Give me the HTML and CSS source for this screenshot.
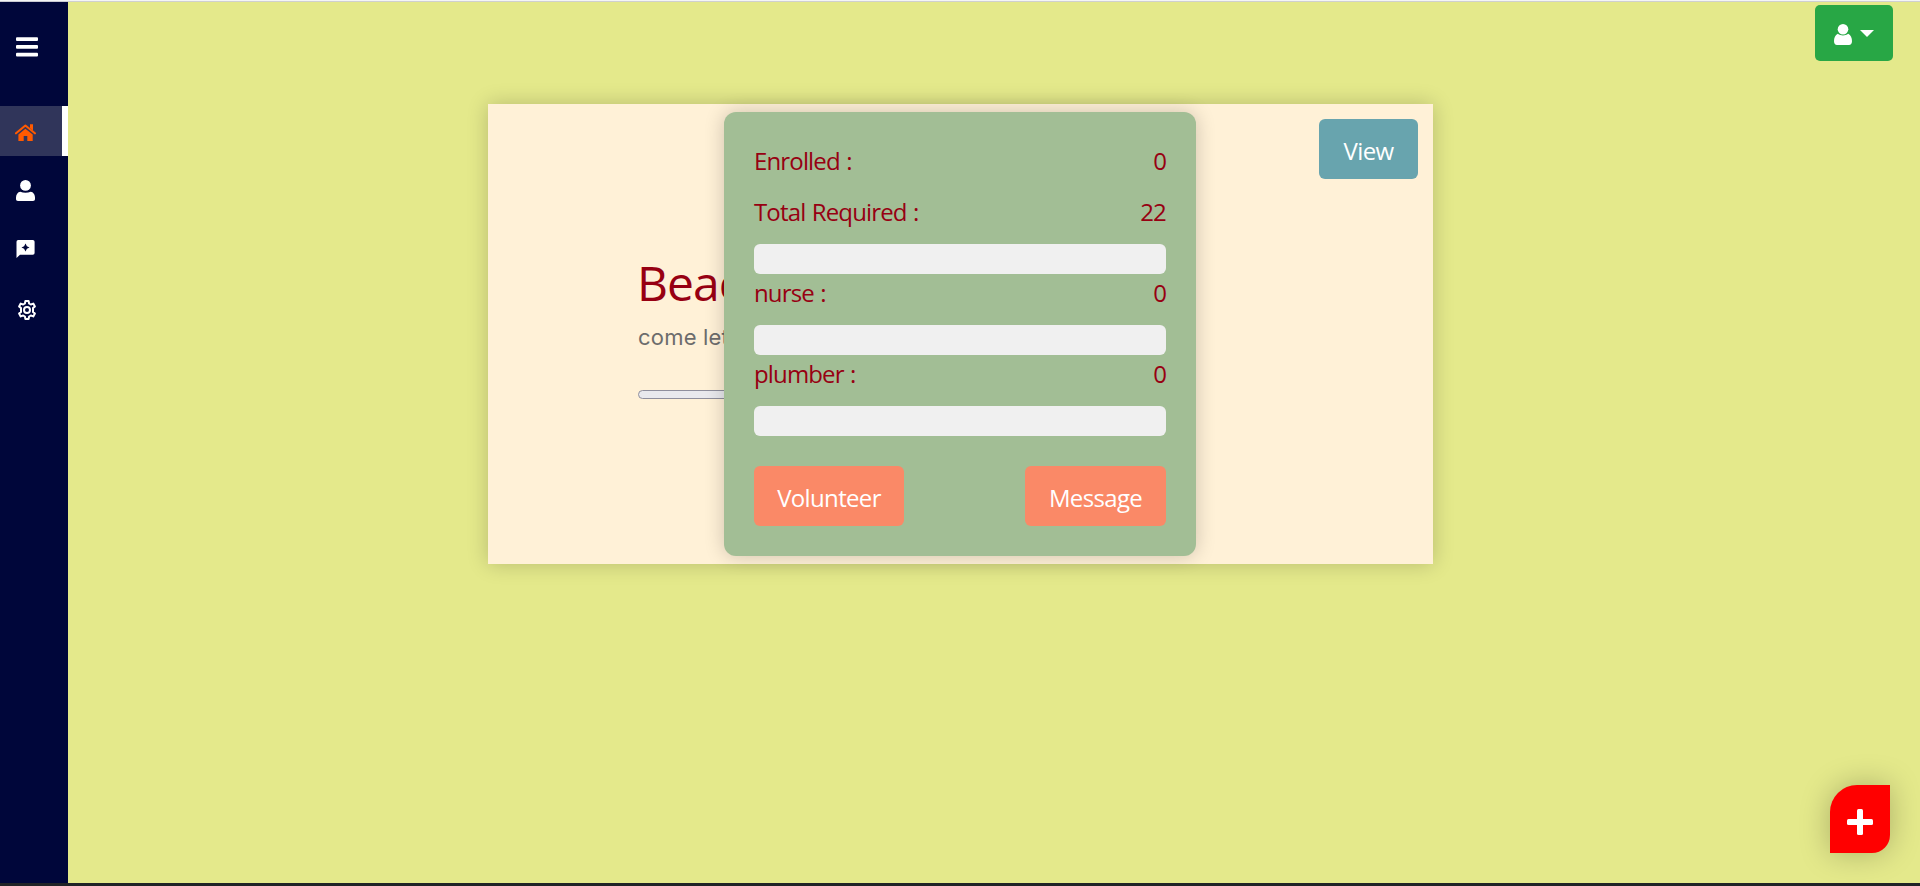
FILE: index.html
```html
<!DOCTYPE html>
<html lang="en">
<head>
<meta charset="utf-8">
<title>Dashboard</title>
<link rel="stylesheet" href="styles.css">
</head>
<body>
<div class="app">
  <nav class="sidebar">
    <a class="menu"><svg width="22" height="20" viewBox="0 0 22 20"><g fill="#fff"><rect y="0.3" width="22" height="3.8" rx="1"/><rect y="8" width="22" height="3.8" rx="1"/><rect y="15.7" width="22" height="3.8" rx="1"/></g></svg></a>
    <a class="item active"><svg class="home" width="21" height="17" viewBox="0 0 21 17"><path d="M1 9.3 10.4 1.5 19.9 9.3" fill="none" stroke="#ff5a00" stroke-width="2.1" stroke-linecap="round" stroke-linejoin="round"/><path d="M15 0.3h3v6.2l-3-2.5zM3.4 10.600l7-5.8 7.3 5.8V17H12.3v-5H8.700v5H3.400z" fill="#ff5a00"/></svg></a>
    <a class="item"><svg width="19" height="21" viewBox="0 0 19 21"><g fill="#fff"><circle cx="9.5" cy="5.4" r="5.4"/><path d="M4.3 11.7c3.2 1.5 7.2 1.5 10.4 0C17.3 12 19 14.500 19 17.500V19c0 1.300-.7 2-2 2H2c-1.300 0-2-.7-2-2v-1.500C0 14.500 1.700 12 4.300 11.700z"/></g></svg></a>
    <a class="item"><svg width="19" height="18" viewBox="0 0 19 18"><path d="M2.200 0h14.600Q18.600 0 18.600 1.800v11.100q0 1.800-1.800 1.800H4L.5 18V1.800Q.5 0 2.200 0z" fill="#fff"/><path d="M9.500 3.500 10.900 6.300 13.500 7.500 10.900 8.800 9.500 11.600 8.100 8.800 5.500 7.500 8.100 6.300z" fill="#00063a"/></svg></a>
    <a class="item gear"><svg width="20" height="20" viewBox="0 0 20 20"><g fill="none" stroke="#fff" stroke-width="2" stroke-linejoin="round"><path d="M8.400 1h3.200l.5 2.500 1.700 1 2.500-.9 1.600 2.800L16 8.100v3.800l1.900 1.700-1.600 2.800-2.500-.9-1.700 1-.5 2.500H8.400l-.5-2.500-1.700-1-2.500.9-1.600-2.800L4 11.900V8.100L2.100 6.400l1.600-2.800 2.500.9 1.700-1z"/><circle cx="10" cy="10" r="3"/></g></svg></a>
  </nav>
  <main class="content">
    <button class="account">
      <svg width="18" height="21" viewBox="0 0 18 21"><g fill="#fff"><circle cx="9" cy="5.300" r="5.300"/><path d="M3.800 9.800c3 2.300 7.400 2.300 10.400 0C16.800 10.800 18 14 18 17.300c0 2.300-1.200 3.700-3 3.700H3c-1.800 0-3-1.400-3-3.700C0 14 1.200 10.800 3.800 9.800z"/></g></svg>
      <span class="caret"></span>
    </button>
    <article class="card">
      <div class="summary">
        <h1 class="title">Beac</h1>
        <p class="text">come let</p>
        <div class="track"></div>
      </div>
      <button class="btn view"><span>View</span></button>
      <section class="modal">
        <div class="row"><span>Enrolled :</span><span>0</span></div>
        <div class="row"><span>Total Required :</span><span>22</span></div>
        <div class="bar"></div>
        <div class="row"><span>nurse :</span><span>0</span></div>
        <div class="bar"></div>
        <div class="row"><span>plumber :</span><span>0</span></div>
        <div class="bar"></div>
        <div class="actions"><button class="btn volunteer"><span>Volunteer</span></button><button class="btn message"><span>Message</span></button></div>
      </section>
    </article>
    <button class="fab"><svg width="26" height="26" viewBox="0 0 26 26"><g fill="#fff"><rect x="10" width="6" height="26" rx="1.500"/><rect y="10" width="26" height="6" rx="1.500"/></g></svg></button>
  </main>
</div>
</body>
</html>
```
FILE: styles.css
```css
* { box-sizing: border-box; }
body { margin: 0; font-family: "Open Sans", "Noto Sans", sans-serif; background: #e4e98b; }
svg { display: block; }
button { border: 0; padding: 0; font: inherit; color: #fff; }
.app { display: flex; height: 886px; overflow: hidden; border-top: 1px solid #f4f5f6; border-bottom: 3px solid #202326; }
.sidebar { width: 68px; background: #00063a; border-top: 1px solid #cacbd2; }
.menu { display: block; height: 104px; padding: 35px 0 0 16px; }
.item { display: flex; align-items: center; height: 50px; padding-left: 16px; margin-bottom: 9px; }
.item.active { background: #30355a; border-right: 6px solid #fff; padding: 3px 0 0 15px; }
.item.gear { padding-left: 17px; height: 54px; }
.content { position: relative; flex: 1; border-top: 1px solid #cfd0cf; display: flex; flex-direction: column; }
.account { align-self: flex-end; margin: 3px 27px 0 0; width: 78px; height: 56px; background: #28a745; border-radius: 5px; display: flex; align-items: center; padding-left: 19px; gap: 8px; }
.account svg { margin-top: 3px; }
.caret { border: 7px solid transparent; border-top-color: #fff; border-bottom: 0; margin-top: 1px; }
.card { position: relative; width: 945px; height: 460px; margin: 43px 0 0 420px; background: #fff1d7; box-shadow: 0 0 20px rgba(0,0,0,.2); display: flex; justify-content: space-between; padding: 15px 15px 0 150px; }
.summary { width: 400px; padding-top: 128px; white-space: nowrap; }
.title { margin: 0 0 0 -1px; font-size: 48px; line-height: 72px; font-weight: 400; color: #970012; letter-spacing: -1px; }
.text { margin: 0; padding-top: 2px; font: 400 22px/33px Inter, sans-serif; color: #6c6c6c; letter-spacing: .2px; }
.track { margin-top: 36px; height: 9px; border: 1px solid #8f8f9d; border-radius: 5px; background: #e9e9ed; }
.btn { height: 60px; border-radius: 6px; font-size: 24px; letter-spacing: -.65px; padding-top: 2px; }
.view { width: 99px; background: #68a4ae; }
.modal { position: absolute; left: 236px; top: 8px; width: 472px; height: 444px; padding: 30px; border-radius: 12px; background: #a2be95; box-shadow: 0 0 20px rgba(0,0,0,.2); }
.row { display: flex; justify-content: space-between; height: 36px; margin-bottom: 15px; padding-top: 1px; font-size: 24px; line-height: 36px; color: #970012; letter-spacing: -.85px; word-spacing: 1px; }
.bar { height: 30px; border-radius: 6px; background: #f0f0f0; }
.actions { display: flex; justify-content: space-between; margin-top: 30px; }
.actions .btn { background: #fa8967; }
.volunteer { width: 150px; }
.message { width: 141px; }
.fab { position: absolute; right: 30px; bottom: 30px; width: 60px; height: 68px; background: red; border-radius: 27px 0 18px 0; box-shadow: 0 0 30px rgba(0,0,0,.25); display: flex; align-items: center; justify-content: center; padding-top: 6px; }
```
